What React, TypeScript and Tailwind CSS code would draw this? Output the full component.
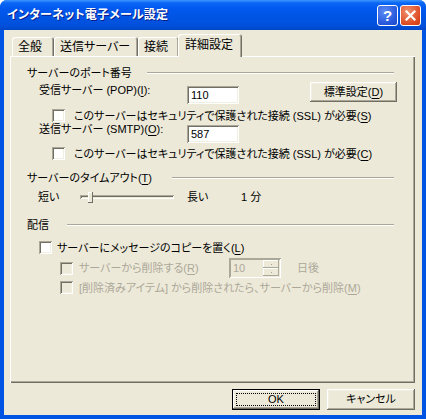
import React from 'react';

const sunken =
  'shadow-[inset_1px_1px_0_#ACA899,inset_-1px_-1px_0_#ffffff,inset_2px_2px_0_#716F64,inset_-2px_-2px_0_#F1EFE2]';
const raised =
  'shadow-[inset_-1px_-1px_0_#716F64,inset_1px_1px_0_#ffffff,inset_-2px_-2px_0_#ACA899,inset_2px_2px_0_#F1EFE2]';

function U({ children }: { children: React.ReactNode }) {
  return <span className="underline underline-offset-[2px]">{children}</span>;
}

function Check({ disabled }: { disabled?: boolean }) {
  return (
    <span
      className={`block w-[13px] h-[13px] shrink-0 ${sunken} ${disabled ? 'bg-[#ECE9D8]' : 'bg-white'}`}
    />
  );
}

function Heading({ children, gap }: { children: React.ReactNode; gap: number }) {
  return (
    <div className="flex items-center h-[14px]">
      <span className="shrink-0">{children}</span>
      <div
        className={`flex-1 h-[2px] border-t border-[#ACA899] bg-white ${gap === 20 ? 'ml-[20px]' : gap === 18 ? 'ml-[18px]' : 'ml-[15px]'}`}
      />
    </div>
  );
}

function Input({ value }: { value: string }) {
  return (
    <div className={`w-[52px] h-[18px] mt-[4px] shrink-0 bg-white ${sunken} pl-[4px] leading-[18px]`}>
      {value}
    </div>
  );
}

function Tab({ label, active, w }: { label: string; active?: boolean; w: string }) {
  if (active)
    return (
      <div
        className={`relative z-10 ${w} h-[23px] -mb-px -ml-[1px] bg-[#ECE9D8] rounded-t-[3px] shadow-[inset_1px_1px_0_#ffffff,inset_-1px_0_0_#716F64,inset_-2px_0_0_#ACA899] pl-[7px] pt-[3px] leading-[16px]`}
      >
        {label}
      </div>
    );
  return (
    <div
      className={`${w} h-[19px] bg-[#ECE9D8] rounded-t-[3px] shadow-[inset_1px_1px_0_#ffffff,inset_-1px_0_0_#716F64,inset_-2px_0_0_#ACA899] pl-[6px] pt-[2px] leading-[16px]`}
    >
      {label}
    </div>
  );
}

export default function App() {
  return (
    <div
      className="w-[426px] h-[419px] flex flex-col overflow-hidden rounded-t-[7px] bg-[#0054E3] font-['Liberation_Sans','Noto_Sans_CJK_JP',sans-serif] text-[11px] leading-[14px] text-black [font-feature-settings:'palt']"
    >
      {/* title bar */}
      <div className="h-[30px] shrink-0 flex items-center bg-[linear-gradient(to_bottom,#3D95FF_0%,#0A66F5_10%,#0058EE_30%,#0054E3_60%,#0050DB_85%,#0046C8_100%)] pl-[7px] pr-[5px]">
        <span className="flex-1 text-white font-bold text-[12px] tracking-[0.2px] [text-shadow:1px_1px_0_#0A1E8C]">
          インターネット電子メール設定
        </span>
        <div className="w-[21px] h-[21px] rounded-[3px] border border-white bg-[radial-gradient(circle_at_35%_30%,#5C8CF4,#2556DB_70%,#1C48C4)] flex items-center justify-center text-white font-bold text-[15px] leading-none">
          ?
        </div>
        <div className="ml-[2px] w-[21px] h-[21px] rounded-[3px] border border-white bg-[radial-gradient(circle_at_35%_30%,#F0916F,#DD4A22_70%,#C63C14)] flex items-center justify-center">
          <svg width="11" height="11" viewBox="0 0 11 11">
            <path d="M1.5 1.5 L9.5 9.5 M9.5 1.5 L1.5 9.5" stroke="white" strokeWidth="2.2" strokeLinecap="square" />
          </svg>
        </div>
      </div>

      {/* body */}
      <div className="flex-1 mx-[4px] mb-[4px] bg-[#ECE9D8] flex flex-col">
        <div className="flex items-end h-[22px] mt-[4px] pl-[8px] shrink-0 text-[12px]">
          <Tab label="全般" w="w-[42px]" />
          <Tab label="送信サーバー" w="w-[84px]" />
          <Tab label="接続" w="w-[41px]" />
          <Tab label="詳細設定" active w="w-[64px]" />
        </div>

        <div className="ml-[6px] mr-[7px] h-[327px] shrink-0 shadow-[inset_1px_1px_0_#ffffff,inset_-1px_-1px_0_#716F64,inset_-2px_-2px_0_#ACA899] pl-[17px] pr-[21px] pt-[10px]">
          <Heading gap={15}>サーバーのポート番号</Heading>

          <div className="flex items-start h-[22px] mt-[2px] pl-[12px]">
            <span className="w-[148px] shrink-0 mt-[1px]">
              受信サーバー (POP)(<U>I</U>):
            </span>
            <Input value="110" />
            <button
              className={`ml-[71px] w-[87px] h-[20px] shrink-0 bg-[#ECE9D8] ${raised} leading-[20px] text-center`}
            >
              標準設定(<U>D</U>)
            </button>
          </div>

          <div className="flex items-center h-[13px] mt-[5px] pl-[25px] gap-[9px] leading-[12px]">
            <Check />
            <span className="whitespace-nowrap">
              このサーバーはセキュリティで保護された接続 (SSL) が必要(<U>S</U>)
            </span>
          </div>

          <div className="flex items-start h-[22px] -mt-[1px] pl-[12px]">
            <span className="w-[148px] shrink-0 mt-[1px]">
              送信サーバー (SMTP)(<U>O</U>):
            </span>
            <Input value="587" />
          </div>

          <div className="flex items-center h-[13px] mt-[4px] pl-[25px] gap-[9px] leading-[12px]">
            <Check />
            <span className="whitespace-nowrap">
              このサーバーはセキュリティで保護された接続 (SSL) が必要(<U>C</U>)
            </span>
          </div>

          <div className="mt-[11px]">
            <Heading gap={20}>
              サーバーのタイムアウト(<U>T</U>)
            </Heading>
          </div>

          <div className="flex items-center h-[14px] mt-[5px] pl-[11px]">
            <span className="w-[42px] shrink-0">短い</span>
            <div className="relative w-[94px] h-[4px] shrink-0 bg-[#ECE9D8] shadow-[inset_1px_1px_0_#ACA899,inset_-1px_-1px_0_#ffffff,inset_2px_2px_0_#716F64]">
              <div className="absolute left-[8px] -top-[3px] w-[5px] h-[11px] bg-[#ECE9D8] shadow-[inset_-1px_-1px_0_#716F64,inset_1px_1px_0_#ffffff]" />
            </div>
            <span className="ml-[13px] w-[54px] shrink-0">長い</span>
            <span>1 分</span>
          </div>

          <div className="mt-[14px]">
            <Heading gap={18}>配信</Heading>
          </div>

          <div className="flex items-center h-[13px] mt-[9px] pl-[12px] gap-[5px] leading-[12px]">
            <Check />
            <span className="whitespace-nowrap">
              サーバーにメッセージのコピーを置く(<U>L</U>)
            </span>
          </div>

          <div className="flex items-center h-[20px] mt-[4px] pl-[33px] text-[#ACA899]">
            <Check disabled />
            <span className="ml-[6px] w-[150px] shrink-0 whitespace-nowrap">
              サーバーから削除する(<U>R</U>)
            </span>
            <div className="flex items-center w-[52px] h-[20px] shrink-0 bg-[#ECE9D8] shadow-[inset_1px_1px_0_#ACA899,inset_-1px_-1px_0_#ffffff,inset_2px_2px_0_#ACA899]">
              <span className="flex-1 pl-[4px] leading-[18px]">10</span>
              <div className="w-[16px] h-[16px] mr-[2px] flex flex-col">
                <div className="flex-1 bg-[#ECE9D8] shadow-[inset_-1px_-1px_0_#ACA899,inset_1px_1px_0_#ffffff] flex items-center justify-center">
                  <span className="block w-[1px] h-[1px] bg-[#ACA899]" />
                </div>
                <div className="flex-1 bg-[#ECE9D8] shadow-[inset_-1px_-1px_0_#ACA899,inset_1px_1px_0_#ffffff] flex items-center justify-center">
                  <span className="block w-[1px] h-[1px] bg-[#ACA899]" />
                </div>
              </div>
            </div>
            <span className="ml-[16px]">日後</span>
          </div>

          <div className="flex items-center h-[13px] mt-[3px] pl-[33px] gap-[6px] leading-[12px] text-[#ACA899]">
            <Check disabled />
            <span className="whitespace-nowrap">
              [削除済みアイテム] から削除されたら、サーバーから削除(<U>M</U>)
            </span>
          </div>
        </div>

        <div className="flex justify-end gap-[7px] mt-[6px] mr-[7px] shrink-0">
          <button className="w-[88px] h-[21px] border border-black bg-[#ECE9D8] p-0">
            <div className={`w-full h-full ${raised} p-[3px]`}>
              <div className="w-full h-full border border-dotted border-black leading-[11px] text-center">
                OK
              </div>
            </div>
          </button>
          <button className={`w-[88px] h-[21px] bg-[#ECE9D8] ${raised} leading-[21px] text-center`}>
            キャンセル
          </button>
        </div>
      </div>
    </div>
  );
}
